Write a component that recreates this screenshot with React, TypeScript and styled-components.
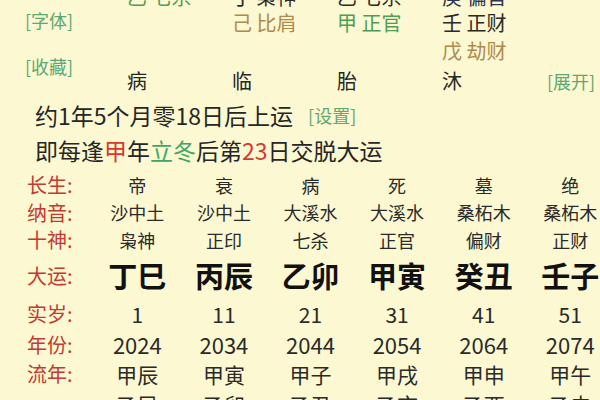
import styled, { createGlobalStyle } from 'styled-components';

const GlobalStyle = createGlobalStyle`
  html, body {
    margin: 0;
    padding: 0;
    background: #fcf8d2;
    overflow: hidden;
  }
  body {
    width: 600px;
    height: 400px;
    font-family: "Noto Sans CJK SC", "Noto Sans", sans-serif;
    color: #262626;
  }
`;

const Page = styled.div`
  width: 600px;
  height: 400px;
  overflow: hidden;
  background: #fcf8d2;
`;

const TopGrid = styled.div`
  display: grid;
  grid-template-columns: 127px repeat(4, 105px) 1fr;
  grid-template-rows: 24px 28px 28px 32px;
  margin-top: -15px;
`;

const SideLinks = styled.div`
  grid-column: 1;
  grid-row: 1 / span 4;
  display: flex;
  flex-direction: column;
  gap: 24px;
  padding: 24px 0 0 25px;
`;

const Link = styled.span`
  color: #5fa872;
  font-size: 18px;
  line-height: 22px;
  white-space: nowrap;
`;

const ExpandLink = styled(Link)`
  grid-column: 6;
  grid-row: 4;
  justify-self: end;
  align-self: center;
  padding-right: 9px;
`;

type ToneProps = { $tone: 'dark' | 'green' | 'gold' | 'navy' };

const tones = {
  dark: '#2a2a2a',
  green: '#4f9d55',
  gold: '#b0894c',
  navy: '#2d3550',
};

const Stem = styled.div<ToneProps & { $col: number; $row: number }>`
  grid-column: ${p => p.$col};
  grid-row: ${p => p.$row};
  align-self: center;
  height: 22px;
  overflow: hidden;
  color: ${p => tones[p.$tone]};
  font-size: 20px;
  line-height: 22px;
  white-space: nowrap;
`;

const Phase = styled.span<{ $col: number }>`
  grid-column: ${p => p.$col};
  grid-row: 4;
  align-self: center;
  font-size: 20px;
  line-height: 26px;
`;

const Info = styled.div`
  display: flex;
  flex-direction: column;
  padding: 0 0 0 35px;
  height: 72px;
`;

const InfoLine = styled.div`
  display: flex;
  align-items: center;
  gap: 15px;
  height: 35px;
  font-size: 23px;
  line-height: 30px;
  white-space: nowrap;
`;

const Red = styled.span`
  color: #d63a2c;
`;

const Green = styled.span`
  color: #3fa66a;
`;

const Table = styled.div`
  display: flex;
  flex-direction: column;
  padding-top: 2px;
`;

const Row = styled.div<{ $h: number }>`
  display: grid;
  grid-template-columns: 94px repeat(6, 86.6px);
  height: ${p => p.$h}px;
  align-items: center;
`;

const Label = styled.span`
  color: #c23b30;
  font-size: 20px;
  line-height: 24px;
  padding-left: 27px;
  white-space: nowrap;
`;

const Cell = styled.span<{ $size: number; $bold?: boolean }>`
  text-align: center;
  font-size: ${p => p.$size}px;
  line-height: 1.15;
  font-weight: ${p => (p.$bold ? 700 : 400)};
  color: ${p => (p.$bold ? '#111' : '#2a2a2a')};
  white-space: nowrap;
`;

const stems: { col: number; row: number; tone: ToneProps['$tone']; text: string }[] = [
  { col: 2, row: 1, tone: 'green', text: '乙 七杀' },
  { col: 3, row: 1, tone: 'dark', text: '丁 枭神' },
  { col: 4, row: 1, tone: 'dark', text: '乙 七杀' },
  { col: 5, row: 1, tone: 'navy', text: '庚 偏官' },
  { col: 3, row: 2, tone: 'gold', text: '己 比肩' },
  { col: 4, row: 2, tone: 'green', text: '甲 正官' },
  { col: 5, row: 2, tone: 'dark', text: '壬 正财' },
  { col: 5, row: 3, tone: 'gold', text: '戊 劫财' },
];

const phases = ['病', '临', '胎', '沐'];

const rows: { label: string; h: number; size: number; bold?: boolean; cells: string[] }[] = [
  { label: '长生', h: 28, size: 18, cells: ['帝', '衰', '病', '死', '墓', '绝'] },
  { label: '纳音', h: 27, size: 18, cells: ['沙中土', '沙中土', '大溪水', '大溪水', '桑柘木', '桑柘木'] },
  { label: '十神', h: 28, size: 18, cells: ['枭神', '正印', '七杀', '正官', '偏财', '正财'] },
  { label: '大运', h: 44, size: 29, bold: true, cells: ['丁巳', '丙辰', '乙卯', '甲寅', '癸丑', '壬子'] },
  { label: '实岁', h: 32, size: 21, cells: ['1', '11', '21', '31', '41', '51'] },
  { label: '年份', h: 29, size: 22, cells: ['2024', '2034', '2044', '2054', '2064', '2074'] },
  { label: '流年', h: 30, size: 21, cells: ['甲辰', '甲寅', '甲子', '甲戌', '甲申', '甲午'] },
  { label: '', h: 30, size: 21, cells: ['乙巳', '乙卯', '乙丑', '乙亥', '乙酉', '乙未'] },
];

const App = () => {
  return (
    <Page>
      <GlobalStyle />
      <TopGrid>
        <SideLinks>
          <Link>[字体]</Link>
          <Link>[收藏]</Link>
        </SideLinks>
        {stems.map(s => (
          <Stem key={`${s.col}-${s.row}`} $col={s.col} $row={s.row} $tone={s.tone}>
            {s.text}
          </Stem>
        ))}
        {phases.map((p, i) => (
          <Phase key={p} $col={i + 2}>{p}</Phase>
        ))}
        <ExpandLink>[展开]</ExpandLink>
      </TopGrid>

      <Info>
        <InfoLine>
          <span>约1年5个月零18日后上运</span>
          <Link>[设置]</Link>
        </InfoLine>
        <InfoLine>
          <span>
            即每逢<Red>甲</Red>年<Green>立冬</Green>后第<Red>23</Red>日交脱大运
          </span>
        </InfoLine>
      </Info>

      <Table>
        {rows.map((r, i) => (
          <Row key={i} $h={r.h}>
            <Label>{r.label ? `${r.label}:` : ''}</Label>
            {r.cells.map((c, j) => (
              <Cell key={j} $size={r.size} $bold={r.bold}>{c}</Cell>
            ))}
          </Row>
        ))}
      </Table>
    </Page>
  );
};

export default App;
